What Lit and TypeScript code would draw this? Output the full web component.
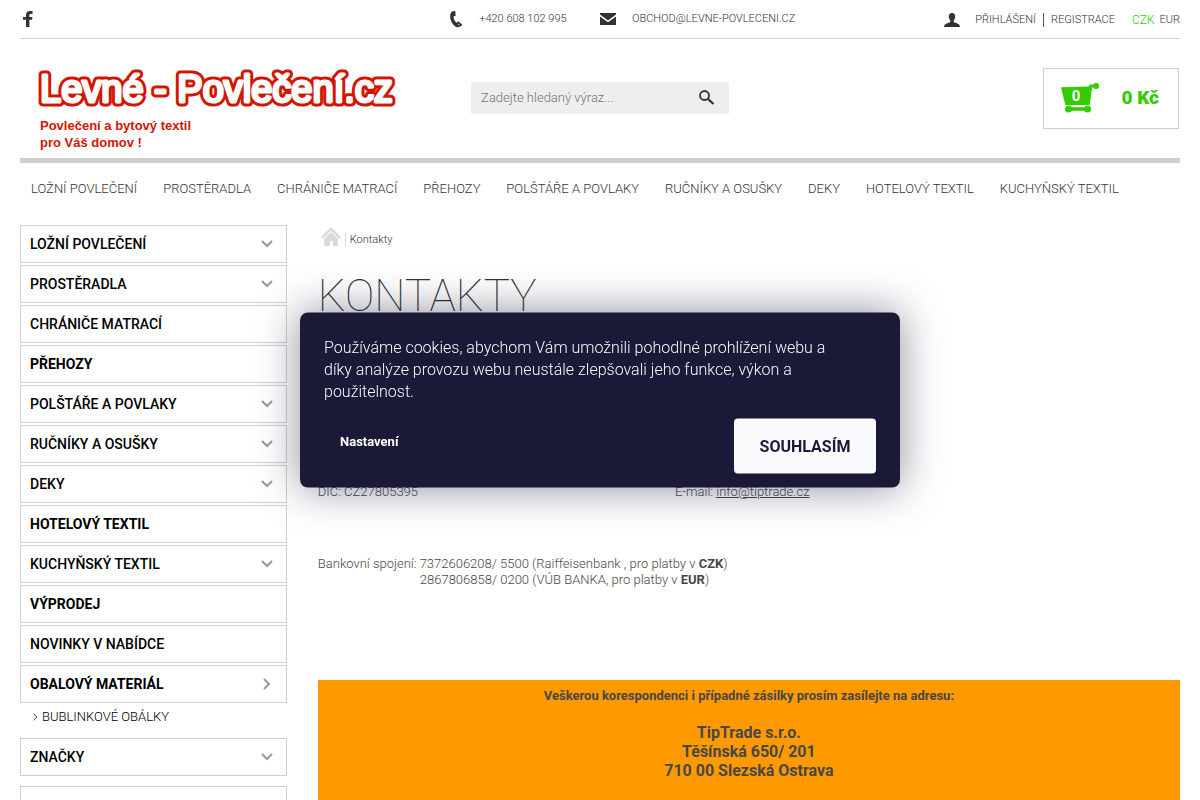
import { LitElement, html, svg, css, nothing } from "lit";
import { customElement, state } from "lit/decorators.js";

interface Category {
  name: string;
  strong?: boolean;
  arrow?: "down" | "right";
  children?: string[];
}

const NAV = [
  "LOŽNÍ POVLEČENÍ",
  "PROSTĚRADLA",
  "CHRÁNIČE MATRACÍ",
  "PŘEHOZY",
  "POLŠTÁŘE A POVLAKY",
  "RUČNÍKY A OSUŠKY",
  "DEKY",
  "HOTELOVÝ TEXTIL",
  "KUCHYŇSKÝ TEXTIL",
];

const CATEGORIES: Category[] = [
  { name: "LOŽNÍ POVLEČENÍ", arrow: "down" },
  { name: "PROSTĚRADLA", arrow: "down" },
  { name: "CHRÁNIČE MATRACÍ" },
  { name: "PŘEHOZY", strong: true },
  { name: "POLŠTÁŘE A POVLAKY", arrow: "down" },
  { name: "RUČNÍKY A OSUŠKY", arrow: "down" },
  { name: "DEKY", arrow: "down" },
  { name: "HOTELOVÝ TEXTIL", strong: true },
  { name: "KUCHYŇSKÝ TEXTIL", arrow: "down" },
  { name: "VÝPRODEJ", strong: true },
  { name: "NOVINKY V NABÍDCE" },
  { name: "OBALOVÝ MATERIÁL", strong: true, arrow: "right", children: ["BUBLINKOVÉ OBÁLKY"] },
  { name: "ZNAČKY", arrow: "down" },
];

const icon = (w: number, h: number, body: unknown) =>
  html`<svg width=${w} height=${h} viewBox="0 0 ${w} ${h}" aria-hidden="true">${body}</svg>`;

const facebook = icon(10, 16, svg`<path fill="#333" d="M9.500 0v3H7.600C6.700 3 6.400 3.400 6.400 4.200V6h3l-.3 2.800H6.400V16H3V8.800H0V6h3V3.900C3 1.400 4.500 0 6.900 0z"/>`);
const phone = icon(14, 17, svg`<path fill="#333" d="M3.200.6 5.600.1c.5-.1.8.2.8.6l.2 3.700c0 .4-.2.600-.6.700l-1.500.3c.1 2.200 1.200 4.700 3 6.400l1.400-1.100c.3-.2.6-.2.9.1l3 2.300c.4.3.4.600.1 1-1.300 1.700-3.400 2.900-5.500 1.900C3.700 14.200 1.400 10.300 1.200 6.100 1.100 3.800 1.500 1.300 3.200.6z"/><path stroke="#fff" stroke-width=".8" fill="none" d="m9.300 14.300 1.300-1.600"/>`);
const mail = icon(16, 12, svg`<path fill="#333" d="M0 0h16v1.600L8 7.400 0 1.600z"/><path fill="#333" d="M0 3.500 8 9.200l8-5.700V12H0z"/>`);
const user = icon(16, 14, svg`<path fill="#333" d="M8 0c2.200 0 3.300 1.500 3.200 3.700-.1 1.700-.7 2.900-1.500 3.700v1.400c.5.9 2 1.100 3.500 1.600 1.800.6 2.600 1.500 2.800 3.600H0c.2-2.100 1-3 2.800-3.600 1.500-.5 3-.7 3.500-1.600V7.400C5.500 6.600 4.900 5.400 4.800 3.700 4.700 1.500 5.800 0 8 0z"/>`);
const lens = icon(16, 15, svg`<circle cx="5.500" cy="5.500" r="4.500" fill="none" stroke="#333" stroke-width="1.800"/><path d="m8.900 8.900 5.600 5.100" stroke="#333" stroke-width="2.200"/>`);
const home = icon(20, 20, svg`<path fill="none" stroke="#d9d9d9" stroke-width="2.400" d="m1 10.800 9-9 9 9"/><path fill="#d9d9d9" d="m10 5 6.800 6.800V19H12v-5H9v5H3.200v-7.200z"/>`);
const chevronDown = icon(12, 8, svg`<path fill="none" stroke="#999" stroke-width="2" d="m1 1 5 5 5-5"/>`);
const chevronRight = icon(12, 12, svg`<path fill="none" stroke="#999" stroke-width="2" d="m3 1 5 5-5 5"/>`);
const chevronSmall = icon(5, 8, svg`<path fill="none" stroke="#555" d="m.7.700 3.300 3.300-3.300 3.300"/>`);
const cart = icon(38, 30, svg`<g fill="#3c0"><path d="M0 4.200 27.500 3.400 29 1.500h4v3h-2L28.700 22H4.300z"/><circle cx="35" cy="3" r="3"/><path d="M7 24.200h20v3.600H7z"/><circle cx="7.500" cy="26" r="3.500"/><circle cx="26.500" cy="26" r="3.500"/></g>`);

@customElement("app-root")
export class AppRoot extends LitElement {
  static styles = css`
    :host {
      display: block;
      height: 100vh;
      overflow: hidden;
      background: #fff;
      color: #474747;
      font: 300 13px/16px Roboto, "Noto Sans", sans-serif;
    }
    *, *::before { box-sizing: border-box; }
    a { color: inherit; text-decoration: none; }
    svg { display: block; flex: none; }
    ul, p, h1 { margin: 0; padding: 0; list-style: none; }
    .page { padding: 0 20px; }

    .topbar {
      display: grid;
      grid-template-columns: 37% 13% 1fr auto;
      align-items: center;
      height: 39px;
      border-bottom: 1px solid #cfcfcf;
      font-size: 11px;
      color: #333;
    }
    .social { padding-left: 3px; width: 16px; }
    .contact { display: flex; align-items: center; gap: 16px; }
    .account { display: flex; align-items: center; gap: 7px; padding-top: 1px; }
    .login { display: flex; align-items: center; gap: 15px; }
    .bar { width: 1px; height: 14px; background: #555; }
    .currency { display: flex; align-items: center; gap: 5px; padding-left: 10px; }
    .active { color: #3c0; font-size: 12px; }

    .header {
      display: grid;
      grid-template-columns: 7fr 4fr 7fr;
      height: 124px;
      padding-top: 29px;
      border-bottom: 5px solid #cfcfcf;
    }
    .logo { padding-left: 16px; overflow: hidden; }
    .wordmark { font: 400 38px "Liberation Sans", Arial, sans-serif; }
    .outline { fill: #d31400; stroke: #d31400; stroke-width: 9px; stroke-linejoin: round; }
    .face { fill: #fff; stroke: #fff; stroke-width: 3px; stroke-linejoin: round; }
    .tagline { fill: #d31400; font: 700 13px "Liberation Sans", Arial, sans-serif; }
    .search { display: flex; height: 32px; margin-top: 14px; background: #eee; }
    .query {
      flex: 1;
      min-width: 0;
      border: 0;
      padding: 0 10px;
      background: none;
      font: inherit;
      color: #333;
    }
    .query::placeholder { color: #757575; opacity: 1; }
    .find { border: 0; background: none; padding: 0 14px 2px; }
    .cart {
      justify-self: end;
      display: flex;
      align-items: center;
      justify-content: space-between;
      width: 136px;
      height: 61px;
      margin-right: 1px;
      padding: 0 19px 2px 17px;
      border: 1px solid #cfcfcf;
      color: #3c0;
      font-size: 19px;
      font-weight: 900;
    }
    .basket { display: grid; }
    .basket > * { grid-area: 1 / 1; }
    .count { color: #fff; font-size: 15px; font-weight: 700; padding: 5px 8px 0 0; text-align: center; }

    .nav { display: flex; justify-content: space-between; padding: 18px 61px 0 11px; }
    .nav a { color: #333; }

    .columns { display: grid; grid-template-columns: 23% 1fr; column-gap: 31px; padding-top: 28px; }
    .sidebar { display: flex; flex-direction: column; gap: 2px; }
    .category {
      display: flex;
      align-items: center;
      justify-content: space-between;
      height: 38px;
      padding: 0 13px 0 9px;
      border: 1px solid #cfcfcf;
      color: #000;
      font-size: 14px;
      font-weight: 500;
    }
    .strong { font-weight: 700; }
    .children { padding: 4px 0 11px 13px; }
    .child { display: flex; align-items: center; gap: 4px; color: #000; }
    .panel { height: 60px; margin-top: 8px; border: 1px solid #cfcfcf; }

    .crumbs { display: flex; align-items: center; gap: 4px; padding: 2px 0 0 3px; font-size: 11px; color: #333; }
    .crumb { border-left: 1px solid #d9d9d9; padding-left: 4px; height: 14px; line-height: 14px; margin-top: 6px; }
    .title { padding: 23px 0 0; font-size: 44px; line-height: 52px; font-weight: 100; color: #333; }
    .details { display: grid; grid-template-columns: 357fr 505fr; padding-top: 162px; }
    .mail { text-decoration: underline; }
    b { font-weight: 700; }
    .bank { padding-top: 56px; }
    .second { padding-left: 102px; }
    .notice {
      margin-top: 92px;
      min-height: 160px;
      padding-top: 8px;
      background: #f90;
      text-align: center;
      font-weight: 700;
    }
    .address { padding-top: 19px; font-size: 16px; line-height: 19px; }

    .cookies {
      position: fixed;
      left: 50%;
      top: 50%;
      transform: translate(-50%, -50%);
      width: 600px;
      max-width: 100%;
      padding: 24px 24px 14px;
      border-radius: 8px;
      background: #1a1937;
      box-shadow: 0 0 40px rgba(26, 25, 55, 0.5);
      color: #f8fafc;
    }
    .message { font-size: 16px; line-height: 22px; padding-right: 32px; }
    .actions { display: flex; align-items: flex-start; justify-content: space-between; padding-top: 16px; }
    .settings, .agree { border: 0; font: 700 13px/20px Roboto, sans-serif; cursor: pointer; }
    .settings { padding: 13px 16px; background: none; color: #fff; }
    .agree { width: 142px; height: 55px; border-radius: 4px; background: #f8fafc; color: #1a1937; font-size: 16px; }
  `;

  @state() private consent = true;

  private renderCategory(c: Category) {
    return html`
      <a class="category ${c.strong ? "strong" : ""}" href="#">
        ${c.name}
        ${c.arrow === "down" ? chevronDown : c.arrow === "right" ? chevronRight : nothing}
      </a>
      ${c.children
        ? html`<div class="children">
            ${c.children.map((n) => html`<a class="child" href="#">${chevronSmall}${n}</a>`)}
          </div>`
        : nothing}
    `;
  }

  private renderCookies() {
    return html`
      <section class="cookies" role="dialog" aria-label="Cookies">
        <p class="message">
          Používáme cookies, abychom Vám umožnili pohodlné prohlížení webu a
          díky analýze provozu webu neustále zlepšovali jeho funkce, výkon a
          použitelnost.
        </p>
        <div class="actions">
          <button class="settings">Nastavení</button>
          <button class="agree" @click=${() => (this.consent = false)}>SOUHLASÍM</button>
        </div>
      </section>
    `;
  }

  render() {
    return html`
      <div class="page">
        <div class="topbar">
          <a class="social" href="#" aria-label="Facebook">${facebook}</a>
          <a class="contact" href="tel:+420608102995">${phone}+420 608 102 995</a>
          <a class="contact" href="#">${mail}OBCHOD@LEVNE-POVLECENI.CZ</a>
          <div class="account">
            <a class="login" href="#">${user}PŘIHLÁŠENÍ</a>
            <span class="bar"></span>
            <a href="#">REGISTRACE</a>
            <span class="currency"><a class="active" href="#">CZK</a><a href="#">EUR</a></span>
          </div>
        </div>

        <header class="header">
          <a class="logo" href="#">
            <svg width="364" height="86" viewBox="0 0 364 86">
              <use href="#wordmark" class="outline"></use>
              <g class="face"><text id="wordmark" class="wordmark" x="4" y="34">Levné - Povlečení.cz</text></g>
              <text class="tagline" x="4" y="62">Povlečení a bytový textil</text>
              <text class="tagline" x="4" y="79">pro Váš domov !</text>
            </svg>
          </a>
          <form class="search" role="search">
            <input class="query" type="text" aria-label="Hledat" placeholder="Zadejte hledaný výraz..." />
            <button class="find" type="button" aria-label="Hledat">${lens}</button>
          </form>
          <a class="cart" href="#">
            <span class="basket">${cart}<span class="count">0</span></span>
            <span>0 Kč</span>
          </a>
        </header>

        <nav class="nav">${NAV.map((n) => html`<a href="#">${n}</a>`)}</nav>

        <div class="columns">
          <aside class="sidebar">
            ${CATEGORIES.map((c) => this.renderCategory(c))}
            <div class="panel"></div>
          </aside>
          <main>
            <div class="crumbs"><a href="#" aria-label="Domů">${home}</a><span class="crumb">Kontakty</span></div>
            <h1 class="title">KONTAKTY</h1>
            <div class="details">
              <span>DIČ: CZ27805395</span>
              <span>E-mail: <a class="mail" href="#">info@tiptrade.cz</a></span>
            </div>
            <p class="bank">Bankovní spojení: 7372606208/ 5500 (Raiffeisenbank , pro platby v <b>CZK</b>)</p>
            <p class="second">2867806858/ 0200 (VÚB BANKA, pro platby v <b>EUR</b>)</p>
            <div class="notice">
              <p>Veškerou korespondenci i případné zásilky prosím zasílejte na adresu:</p>
              <p class="address">TipTrade s.r.o.<br />Těšínská 650/ 201<br />710 00 Slezská Ostrava</p>
            </div>
          </main>
        </div>
      </div>
      ${this.consent ? this.renderCookies() : nothing}
    `;
  }
}
